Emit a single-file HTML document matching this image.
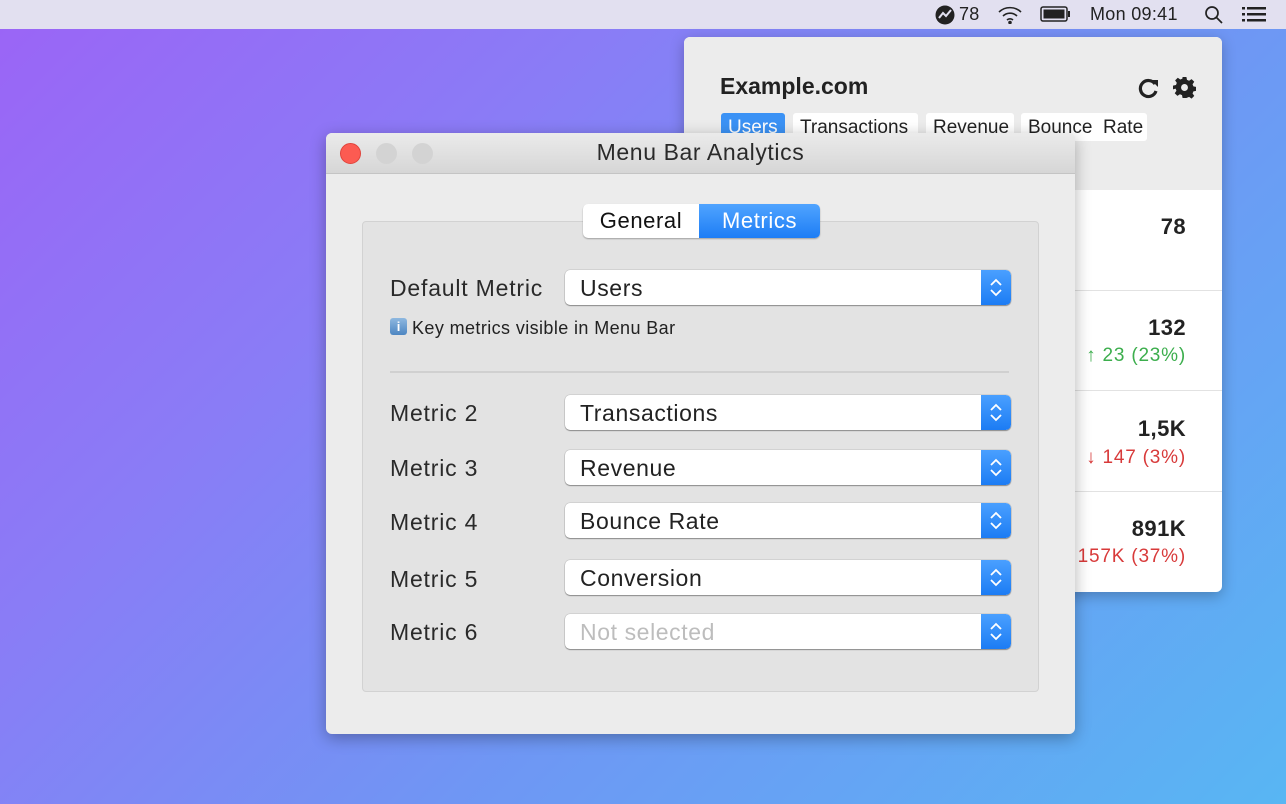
<!DOCTYPE html>
<html><head><meta charset="utf-8"><style>
*{margin:0;padding:0;box-sizing:border-box}
body{width:1286px;height:804px;overflow:hidden;position:relative;font-family:"Liberation Sans",sans-serif;color:#222;
background:linear-gradient(135deg,#9b64f6 0%,#8a7cf6 30%,#6f96f4 60%,#58b6f3 100%)}
.a{position:absolute}
.mb{left:0;top:0;width:1286px;height:29px;background:#e2e0f0;font-size:18px;color:#222;letter-spacing:.3px}
.pop{left:684px;top:37px;width:538px;height:555px;background:#fff;border-radius:6px;box-shadow:0 4px 14px rgba(0,0,0,.25);overflow:hidden}
.pophd{left:0;top:0;width:538px;height:153px;background:#ececec}
.chip{top:76px;height:28px;background:#fff;border-radius:3px;font-size:19px;padding:4px 7px 0;white-space:nowrap}
.row{left:0;width:538px;border-top:1px solid #e2e2e2}
.num{right:36px;font-size:22px;font-weight:bold;text-align:right;letter-spacing:.4px}
.dl{right:36px;font-size:19px;text-align:right;letter-spacing:.8px}
.win{left:326px;top:133px;width:749px;height:601px;background:#ececec;border-radius:6px;box-shadow:0 4px 16px rgba(0,0,0,.3);overflow:hidden}
.tb{left:0;top:0;width:749px;height:41px;background:linear-gradient(#ebebeb,#d6d6d6);border-bottom:1px solid #c4c4c4;text-align:center;font-size:23px;line-height:39px;color:#2a2a2a;letter-spacing:.6px}
.dot{top:10px;width:21px;height:21px;border-radius:50%;background:#d3d3d3}
.box{left:36px;top:88px;width:677px;height:471px;background:#e3e3e3;border:1px solid #d2d2d2;border-radius:4px}
.lbl{font-size:23px;color:#2a2a2a;letter-spacing:.8px}
.sel{left:239px;width:446px;height:35px;background:#fff;border-radius:5px;box-shadow:0 1px 1px rgba(0,0,0,.35),0 0 0 .5px rgba(0,0,0,.15);font-size:23px;padding:5px 0 0 15px;overflow:hidden;letter-spacing:.6px}
.st{right:0;top:0;width:30px;height:35px;background:linear-gradient(#4aa0ff,#1c7cf4);border-radius:0 5px 5px 0}
.st svg{position:absolute;left:8px;top:7px}
</style></head><body>
<div class="a mb">
 <svg class="a" style="left:935px;top:5px" width="20" height="20" viewBox="0 0 20 20"><circle cx="10" cy="10" r="9.5" fill="#222"/><path d="M4 13 L8 8 L11 11 L16 5" stroke="#e2e0f0" stroke-width="2" fill="none"/></svg>
 <span class="a" style="left:959px;top:4px">78</span>
 <svg class="a" style="left:997px;top:5px" width="26" height="19" viewBox="0 0 26 19" fill="none" stroke="#222" stroke-width="1.6"><path d="M2 7a16 16 0 0 1 22 0"/><path d="M6 11a10 10 0 0 1 14 0"/><path d="M10 15a4.5 4.5 0 0 1 6 0"/><circle cx="13" cy="17.5" r="1" fill="#222"/></svg>
 <svg class="a" style="left:1040px;top:6px" width="31" height="16" viewBox="0 0 31 16"><rect x="1" y="1" width="26" height="14" rx="2" fill="none" stroke="#222" stroke-width="1.5"/><rect x="3.5" y="3.5" width="21" height="9" fill="#222"/><rect x="28" y="5" width="2" height="6" fill="#222"/></svg>
 <span class="a" style="left:1090px;top:4px">Mon 09:41</span>
 <svg class="a" style="left:1204px;top:5px" width="20" height="20" viewBox="0 0 20 20" fill="none" stroke="#222" stroke-width="1.7"><circle cx="8" cy="8" r="6"/><path d="M12.5 12.5L18 18"/></svg>
 <svg class="a" style="left:1242px;top:7px" width="24" height="15" viewBox="0 0 24 15" fill="#222"><rect x="0" y="0" width="3" height="2.5"/><rect x="5" y="0" width="19" height="2.5"/><rect x="0" y="6" width="3" height="2.5"/><rect x="5" y="6" width="19" height="2.5"/><rect x="0" y="12" width="3" height="2.5"/><rect x="5" y="12" width="19" height="2.5"/></svg>
</div>
<div class="a pop">
 <div class="a pophd"></div>
 <div class="a" style="left:36px;top:36px;font-size:23px;font-weight:bold;color:#222">Example.com</div>
 <svg class="a" style="left:454px;top:40px" width="22" height="22" viewBox="0 0 22 22" fill="none"><path d="M17 7A8 8 0 1 0 18 14" stroke="#222" stroke-width="3.2"/><path d="M13 3h7v7z" fill="#222"/></svg>
 <svg class="a" style="left:489px;top:39px" width="23" height="23" viewBox="0 0 24 24"><path fill="#222" d="M10 1h4l.6 3.1 2.2.9 2.6-1.8 2.8 2.8-1.8 2.6.9 2.2 3.1.6v4l-3.1.6-.9 2.2 1.8 2.6-2.8 2.8-2.6-1.8-2.2.9L14 23h-4l-.6-3.1-2.2-.9-2.6 1.8-2.8-2.8 1.8-2.6-.9-2.2L0 14v-4l3.1-.6.9-2.2-1.8-2.6 2.8-2.8 2.6 1.8 2.2-.9z"/><circle cx="12" cy="12" r="3.6" fill="#ececec"/></svg>
 <div class="a chip" style="left:37px;background:#3b92f5;color:#fff;width:64px">Users</div>
 <div class="a chip" style="left:109px;width:125px">Transactions</div>
 <div class="a chip" style="left:242px;width:88px">Revenue</div>
 <div class="a chip" style="left:337px;width:126px">Bounce&nbsp; Rate</div>
 <div class="a num" style="top:177px">78</div>
 <div class="a row" style="top:253px"></div>
 <div class="a num" style="top:278px">132</div>
 <div class="a dl" style="top:308px;color:#3cae4d">↑ 23 (23%)</div>
 <div class="a row" style="top:353px"></div>
 <div class="a num" style="top:379px">1,5K</div>
 <div class="a dl" style="top:410px;color:#d83a3a">↓ 147 (3%)</div>
 <div class="a row" style="top:454px"></div>
 <div class="a num" style="top:479px">891K</div>
 <div class="a dl" style="top:509px;color:#d83a3a">↓ 157K (37%)</div>
</div>
<div class="a win">
 <div class="a tb">Menu Bar Analytics</div>
 <div class="a dot" style="left:14px;background:#fc5b52;border:1px solid #e0443c"></div>
 <div class="a dot" style="left:50px"></div>
 <div class="a dot" style="left:86px"></div>
 <div class="a box"></div>
 <div class="a" style="left:257px;top:71px;width:237px;height:34px;border-radius:5px;background:#fff;box-shadow:0 1px 1.5px rgba(0,0,0,.3);overflow:hidden;letter-spacing:.6px">
  <div class="a" style="left:0;top:0;width:116px;height:34px;text-align:center;font-size:22px;line-height:34px;color:#111">General</div>
  <div class="a" style="left:116px;top:0;width:121px;height:34px;text-align:center;font-size:22px;line-height:34px;color:#fff;background:linear-gradient(#50a4ff,#1d7df5)">Metrics</div>
 </div>
 <div class="a lbl" style="left:64px;top:142px">Default Metric</div>
 <div class="a sel" style="top:137px">Users<div class="a st"></div></div>
 <div class="a" style="left:64px;top:185px;width:17px;height:17px;border-radius:3px;background:linear-gradient(#8fb8e0,#4d86c2);color:#fff;font-size:13px;font-weight:bold;text-align:center;line-height:17px">i</div>
 <div class="a" style="left:86px;top:185px;font-size:18px;color:#222;letter-spacing:.4px">Key metrics visible in Menu Bar</div>
 <div class="a" style="left:64px;top:238px;width:619px;height:2px;background:#d0d0d0"></div>
 <div class="a lbl" style="left:64px;top:267px">Metric 2</div>
 <div class="a sel" style="top:262px">Transactions<div class="a st"></div></div>
 <div class="a lbl" style="left:64px;top:322px">Metric 3</div>
 <div class="a sel" style="top:317px">Revenue<div class="a st"></div></div>
 <div class="a lbl" style="left:64px;top:376px">Metric 4</div>
 <div class="a sel" style="top:370px">Bounce Rate<div class="a st"></div></div>
 <div class="a lbl" style="left:64px;top:433px">Metric 5</div>
 <div class="a sel" style="top:427px">Conversion<div class="a st"></div></div>
 <div class="a lbl" style="left:64px;top:486px">Metric 6</div>
 <div class="a sel" style="top:481px;color:#bdbdbd">Not selected<div class="a st"></div></div>
</div>
<script>
document.querySelectorAll('.st').forEach(function(e){e.innerHTML='<svg width="14" height="21" viewBox="0 0 14 21" fill="none" stroke="#fff" stroke-width="1.8"><path d="M2 8l5-5 5 5M2 13l5 5 5-5"/></svg>';});
</script>
</body></html>
